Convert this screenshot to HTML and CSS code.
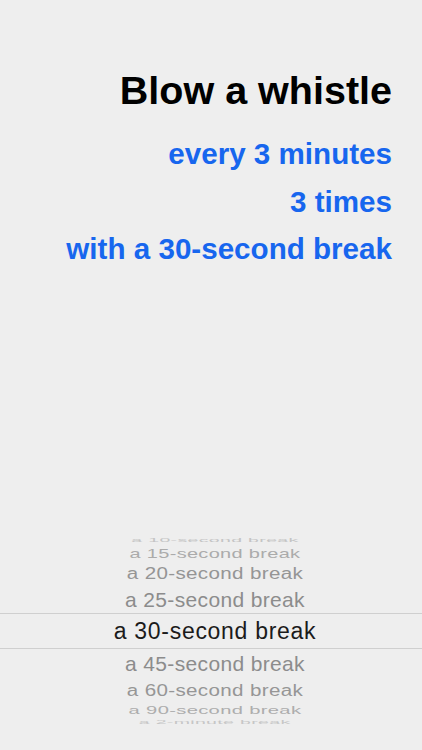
FILE: index.html
```html
<!doctype html>
<html lang="en">
<head>
    <meta charset="UTF-8">
    <meta name="viewport" content="width=device-width, initial-scale=1.0">
    <title>Whistle</title>
    <link rel="stylesheet" href="styles.css">
</head>
<body>
    <div class="screen">
        <div class="header">
            <h1 class="title">Blow a whistle</h1>
            <div class="option">every 3 minutes</div>
            <div class="option">3 times</div>
            <div class="option">with a 30-second break</div>
        </div>
        <div class="picker">
            <div class="row up-4"><span>a 10-second break</span></div>
            <div class="row up-3"><span>a 15-second break</span></div>
            <div class="row up-2"><span>a 20-second break</span></div>
            <div class="row up-1"><span>a 25-second break</span></div>
            <div class="row selected"><span>a 30-second break</span></div>
            <div class="row down-1"><span>a 45-second break</span></div>
            <div class="row down-2"><span>a 60-second break</span></div>
            <div class="row down-3"><span>a 90-second break</span></div>
            <div class="row down-4"><span>a 2-minute break</span></div>
        </div>
    </div>
</body>
</html>
```

FILE: styles.css
```css
body{
    margin: 0;
    padding: 0;
    background: #eeeeee;
    font-family: "Liberation Sans", Arial, sans-serif;
}
.screen{
    display: flex;
    flex-direction: column;
    min-height: 750px;
    box-sizing: border-box;
    padding-bottom: 23px;
}
.header{
    display: flex;
    flex-direction: column;
    align-items: flex-end;
    padding: 68px 30px 0 0;
}
.title{
    margin: 0 0 17px 0;
    font-size: 39.5px;
    line-height: 45px;
    font-weight: bold;
    color: #000;
}
.option{
    font-size: 29.6px;
    line-height: 47.5px;
    font-weight: bold;
    color: #1766ee;
}
.picker{
    margin-top: auto;
    display: flex;
    flex-direction: column;
}
.row{
    display: flex;
    justify-content: center;
    align-items: center;
    padding-left: 8px;
    font-size: 21px;
    letter-spacing: .35px;
    color: #8c8c8c;
    white-space: nowrap;
}
.row span{
    display: inline-block;
    line-height: 1;
}
.selected{
    height: 36px;
    box-sizing: border-box;
    border-top: 1px solid #cfcfcf;
    border-bottom: 1px solid #cfcfcf;
    font-size: 23px;
    letter-spacing: .7px;
    color: #1b1b1b;
}
.up-4{ height: 12px; color: #c4c4c4; }
.up-4 span{ transform: scale(.93, .28); }
.up-3{ height: 16px; color: #ababab; }
.up-3 span{ transform: scale(.95, .58); }
.up-2{ height: 25px; color: #959595; }
.up-2 span{ transform: scale(.98, .78); }
.up-1{ height: 27px; }
.up-1 span{ transform: scale(1, .95); }
.down-1{ height: 29px; }
.down-1 span{ transform: scale(1, .97); }
.down-2{ height: 24px; color: #969696; }
.down-2 span{ transform: scale(.98, .78); }
.down-3{ height: 15px; color: #adadad; }
.down-3 span{ transform: scale(.96, .54); }
.down-4{ height: 10px; color: #c6c6c6; }
.down-4 span{ transform: scale(.93, .26); }
```
